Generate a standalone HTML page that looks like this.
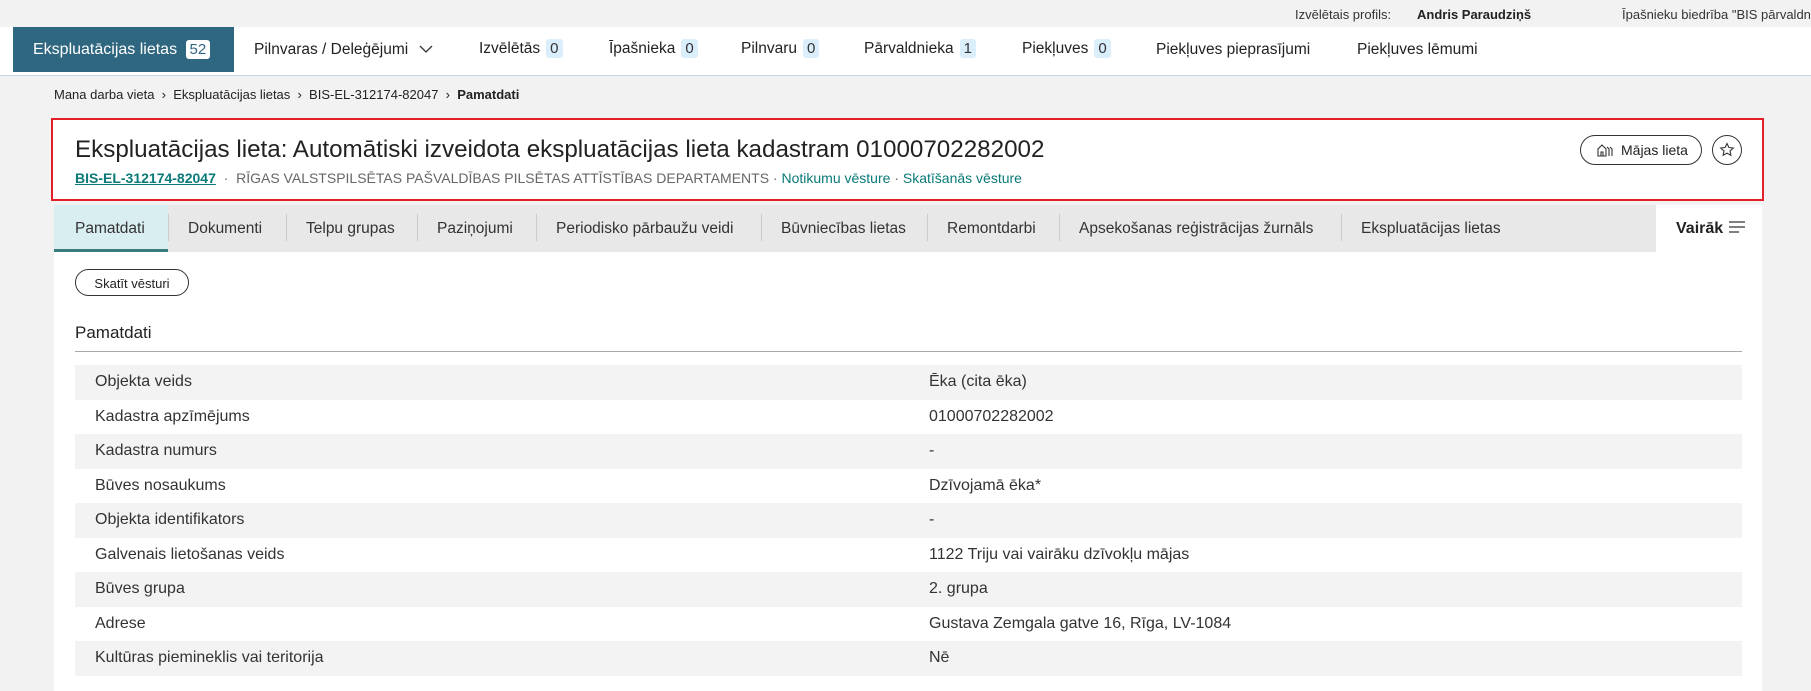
<!DOCTYPE html>
<html><head><meta charset="utf-8"><style>
*{box-sizing:border-box;margin:0;padding:0}
body{width:1811px;height:691px;overflow:hidden;background:#f2f2f2;font-family:"Liberation Sans",Arial,sans-serif;color:#222;position:relative}
.abs{position:absolute;white-space:nowrap}
.top{position:absolute;left:0;top:0;width:1811px;height:27px;background:#f2f2f2;font-size:13px;color:#333}
.nav{position:absolute;left:0;top:27px;width:1811px;height:49px;background:#fff;border-bottom:1px solid #c5d7e0}
.act{position:absolute;left:13px;top:0;width:221px;height:45px;background:#2f6680;color:#fff;font-size:16px}
.ni{position:absolute;top:14px;font-size:15.5px;color:#222;white-space:nowrap}
.b{display:inline-block;background:#dbeefc;color:#333;padding:1px 4px;border-radius:3px;margin-left:6px;font-size:15px}
.card{position:absolute;left:51px;top:118px;width:1713px;height:83px;background:#fff;border:2px solid #e3202a}
.tabs{position:absolute;left:54px;top:205px;width:1602px;height:47px;background:#e8e8e8}
.tab{position:absolute;top:15px;font-size:15.5px;color:#333;white-space:nowrap}
.sep{position:absolute;top:9px;width:1px;height:27px;background:#ccc}
.content{position:absolute;left:54px;top:252px;width:1708px;height:439px;background:#fff}
.row{position:absolute;left:75px;width:1667px;height:34.5px;font-size:16px;color:#333}
.row span{position:absolute;top:8px}
.g{background:#f3f3f3}
</style></head><body>
<div class="top">
<span class="abs" style="left:1295px;top:7px">Izvēlētais profils:</span>
<span class="abs" style="left:1417px;top:7px;font-weight:bold;color:#222">Andris Paraudziņš</span>
<span class="abs" style="left:1622px;top:7px">Īpašnieku biedrība "BIS pārvaldnieks Nr.1</span>
</div>
<div class="nav">
<div class="act"><span class="abs" style="left:20px;top:13px">Ekspluatācijas lietas <span style="display:inline-block;background:#fff;color:#2f6680;padding:1px 4px;border-radius:3px;margin-left:4px;font-size:15px">52</span></span></div>
<div class="ni" style="left:254px">Pilnvaras / Deleģējumi <svg width="14" height="10" viewBox="0 0 14 10" style="margin-left:6px"><path d="M1 2l6 6 6-6" fill="none" stroke="#333" stroke-width="1.3"/></svg></div>
<div class="ni" style="left:479px;top:12px">Izvēlētās<span class="b">0</span></div>
<div class="ni" style="left:609px;top:12px">Īpašnieka<span class="b">0</span></div>
<div class="ni" style="left:741px;top:12px">Pilnvaru<span class="b">0</span></div>
<div class="ni" style="left:864px;top:12px">Pārvaldnieka<span class="b">1</span></div>
<div class="ni" style="left:1022px;top:12px">Piekļuves<span class="b">0</span></div>
<div class="ni" style="left:1156px">Piekļuves pieprasījumi</div>
<div class="ni" style="left:1357px">Piekļuves lēmumi</div>
</div>
<div class="abs" style="left:54px;top:87px;font-size:13px;color:#222">Mana darba vieta &nbsp;›&nbsp; Ekspluatācijas lietas &nbsp;›&nbsp; BIS-EL-312174-82047 &nbsp;›&nbsp; <b>Pamatdati</b></div>
<div class="card">
<div class="abs" style="left:22px;top:16px;font-size:24.2px;color:#222">Ekspluatācijas lieta: Automātiski izveidota ekspluatācijas lieta kadastram 01000702282002</div>
<div class="abs" style="left:22px;top:50px;font-size:14px;color:#666"><span style="color:#0a7a78;font-weight:bold;text-decoration:underline">BIS-EL-312174-82047</span> &nbsp;·&nbsp; RĪGAS VALSTSPILSĒTAS PAŠVALDĪBAS PILSĒTAS ATTĪSTĪBAS DEPARTAMENTS · <span style="color:#0a7a78">Notikumu vēsture</span> · <span style="color:#0a7a78">Skatīšanās vēsture</span></div>
<div class="abs" style="left:1527px;top:15px;width:122px;height:30px;border:1px solid #333;border-radius:15px;font-size:14px;padding:6px 0 0 40px"><svg width="16" height="14" viewBox="0 0 16 14" style="position:absolute;left:16px;top:7px"><path d="M1 13V6l4-4 4 4v7H1zM4 13V9h2v4M10 4l2 2v7M13 4l2 2v7" fill="none" stroke="#333" stroke-width="1.1"/></svg>Mājas lieta</div>
<div class="abs" style="left:1659px;top:15px;width:30px;height:30px;border:1px solid #333;border-radius:50%"><svg width="16" height="16" viewBox="0 0 16 16" style="position:absolute;left:6px;top:6px"><path d="M8 1.5l1.9 4 4.4.5-3.3 3 .9 4.3L8 11.1l-3.9 2.2.9-4.3-3.3-3 4.4-.5z" fill="none" stroke="#333" stroke-width="1.1"/></svg></div>
</div>
<div class="tabs">
<div style="position:absolute;left:0;top:0;width:114px;height:47px;background:#d8eef0;border-bottom:3px solid #3a7d7d"></div>
<div class="tab" style="left:21px">Pamatdati</div>
<div class="sep" style="left:114px"></div>
<div class="tab" style="left:134px">Dokumenti</div>
<div class="sep" style="left:232px"></div>
<div class="tab" style="left:252px">Telpu grupas</div>
<div class="sep" style="left:363px"></div>
<div class="tab" style="left:383px">Paziņojumi</div>
<div class="sep" style="left:482px"></div>
<div class="tab" style="left:502px">Periodisko pārbaužu veidi</div>
<div class="sep" style="left:707px"></div>
<div class="tab" style="left:727px">Būvniecības lietas</div>
<div class="sep" style="left:873px"></div>
<div class="tab" style="left:893px">Remontdarbi</div>
<div class="sep" style="left:1005px"></div>
<div class="tab" style="left:1025px">Apsekošanas reģistrācijas žurnāls</div>
<div class="sep" style="left:1287px"></div>
<div class="tab" style="left:1307px">Ekspluatācijas lietas</div>
</div>
<div class="abs" style="left:1656px;top:205px;width:106px;height:47px;background:#fff;font-size:16px;font-weight:bold;padding:15px 0 0 20px;color:#222">Vairāk <svg width="18" height="14" viewBox="0 0 18 14" style="vertical-align:-1px"><path d="M1 2h16M1 7h16M1 12h10" stroke="#333" stroke-width="1.3"/></svg></div>
<div class="content"></div>
<div class="abs" style="left:75px;top:269px;width:114px;height:27px;border:1px solid #333;border-radius:14px;background:#fff;font-size:13px;text-align:center;padding-top:6px">Skatīt vēsturi</div>
<div class="abs" style="left:75px;top:323px;font-size:17px;color:#222">Pamatdati</div>
<div class="abs" style="left:75px;top:351px;width:1667px;height:1px;background:#aaa"></div>
<div class="row g" style="top:365px"><span style="left:20px">Objekta veids</span><span style="left:854px">Ēka (cita ēka)</span></div>
<div class="row" style="top:399.5px"><span style="left:20px">Kadastra apzīmējums</span><span style="left:854px">01000702282002</span></div>
<div class="row g" style="top:434px"><span style="left:20px">Kadastra numurs</span><span style="left:854px">-</span></div>
<div class="row" style="top:468.5px"><span style="left:20px">Būves nosaukums</span><span style="left:854px">Dzīvojamā ēka*</span></div>
<div class="row g" style="top:503px"><span style="left:20px">Objekta identifikators</span><span style="left:854px">-</span></div>
<div class="row" style="top:537.5px"><span style="left:20px">Galvenais lietošanas veids</span><span style="left:854px">1122 Triju vai vairāku dzīvokļu mājas</span></div>
<div class="row g" style="top:572px"><span style="left:20px">Būves grupa</span><span style="left:854px">2. grupa</span></div>
<div class="row" style="top:606.5px"><span style="left:20px">Adrese</span><span style="left:854px">Gustava Zemgala gatve 16, Rīga, LV-1084</span></div>
<div class="row g" style="top:641px"><span style="left:20px">Kultūras piemineklis vai teritorija</span><span style="left:854px">Nē</span></div>
</body></html>
